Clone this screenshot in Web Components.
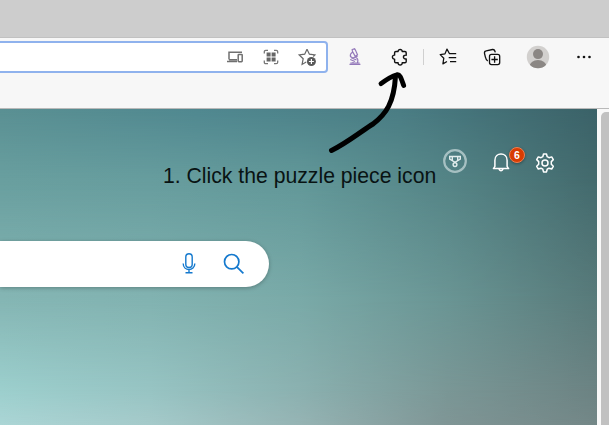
<!DOCTYPE html>
<html lang="en">
<head>
<meta charset="utf-8">
<title>New tab</title>
<style>
html,body{margin:0;height:100%;overflow:hidden}
body{font-family:"Liberation Sans",Arial,sans-serif}
</style>
</head>
<body>
<browser-window></browser-window>
<script>
const icons = {
  devices: '<g stroke="#707070" stroke-width="1.5"><path d="M6 14.5V7.3H19M4 16.6h10M6 14.8h8"/><rect x="15.2" y="9.4" width="4" height="7.4" rx=".7"/></g>',
  grid: '<g stroke="#777" stroke-width="1.3"><path d="M5.3 8.5V6.8Q5.3 5.3 6.8 5.3H9M15 5.3h2.2q1.5 0 1.5 1.5V8.5M18.7 15.5v1.7q0 1.5-1.5 1.5H15M9 18.7H6.8q-1.5 0-1.5-1.5V15.5"/></g><path fill="#666" d="M7.6 7.6h4v4h-4zM12.6 7.6h4v4h-4zM7.6 12.6h4v4h-4zM12.6 12.6h4v4h-4z"/>',
  addstar: '<path stroke="#666" stroke-width="1.2" d="M12 4.2 9.7 9.2 4.2 9.9 8.2 13.7 7.1 19.4 11.2 17M12 4.2 14.4 9.2 19.9 9.9 18.3 11.5"/><circle cx="16.4" cy="16.5" r="4.5" fill="#595959"/><path stroke="#fff" stroke-width="1.2" d="M13.9 16.5h5M16.4 14v5"/>',
  microscope: '<g stroke="#9479ba" stroke-width="1.2"><path d="M9.2 4.5 11.6 3.8 12.4 5.1 14.5 9.8 12.2 11.3 9.4 6.2zM9.5 7.2Q6.7 8.8 7.5 11.5L9.8 13 14.7 11M8.2 12.7 13.5 15M12.6 12.5Q15.8 13.5 14.5 17.7M7.2 14.5 12 16.5M7.3 18H16.6M6.5 19.4H17.4M10 15.5V18"/></g>',
  puzzle: '<path stroke="#111" stroke-width="1.4" stroke-linejoin="round" d="M8.9 6.5h2.2c-.3-2.7 4.4-2.7 4.1 0h2.7q1.3 0 1.3 1.3v2.4c-3.7-.5-3.7 4.2 0 3.7v2.5q0 1.3-1.3 1.3h-2.7c.3 3.1-4.4 3.1-4.1 0H8.9q-1.3 0-1.3-1.3v-2.3c-2.9.3-2.9-4.3 0-4V7.8q0-1.3 1.3-1.3z"/>',
  favorites: '<path stroke="#111" stroke-width="1.25" stroke-linejoin="round" d="M14.3 8.7h-.8L11 4.1 9 8.8 4.2 9.6 7.8 13.2 6.9 18.9 11 16.5M14 8.5h6.2M12.7 12.5h7.5M14 16.5h6.2"/>',
  collections: '<g stroke="#111" stroke-width="1.3"><rect x="9.5" y="9.4" width="10.2" height="10.2" rx="2"/><path d="M14.6 11.3v6.4M11.4 14.5h6.4M7.8 16Q6 15 5.4 12.2L4.5 8.3Q4.2 6.2 6.2 5.9L12.5 4.5Q14.6 4.2 15.3 7.3"/></g>',
  avatar: '<defs><clipPath id="c"><circle cx="12" cy="12" r="11.2"/></clipPath></defs><g clip-path="url(#c)"><path fill="#d2d0ce" d="M0 0h24v24H0z"/><g fill="#8b8784"><circle cx="12" cy="9.1" r="5"/><ellipse cx="12" cy="21.8" rx="8.6" ry="6.8"/></g></g>',
  dots: '<g fill="#111"><circle cx="6.5" cy="12" r="1.3"/><circle cx="12" cy="12" r="1.3"/><circle cx="17.5" cy="12" r="1.3"/></g>',
  medal: '<circle cx="12" cy="12" r="10.8" stroke="#a6c0c2" stroke-width="2.2"/><g stroke="#e2eded" stroke-width="1.4"><path d="M6.7 7.5h10.6V10L12 13.3 6.7 10zM9.3 7.5v3.7M14.7 7.5v3.7"/><circle cx="12" cy="15.6" r="1.9"/></g>',
  bell: '<g stroke="#fff" stroke-width="1.5" stroke-linejoin="round"><path d="M5.9 16.4V10.2C5.9 1.8 18.1 1.8 18.1 10.2V16.4L19.6 18.6H4.4z"/><path d="M9.9 19Q12 22.3 14.1 19"/></g>',
  gear: '<g stroke="#fff" stroke-width="1.5" stroke-linejoin="round"><circle cx="12" cy="12" r="3"/><path d="M10.5 3h3l.7 2.7 1.8 1 2.7-.8 1.6 2.7-2 2v2.7l2 2-1.6 2.7-2.7-.8-1.8 1-.7 2.7h-3l-.7-2.7-1.8-1-2.7.8-1.6-2.7 2-2v-2.7l-2-2 1.6-2.7 2.7.8 1.8-1z"/></g>',
  mic: '<g stroke="#1479ce" stroke-width="1.4"><rect x="8.8" y="1.7" width="6.4" height="13.8" rx="3.2"/><path d="M6.2 11.5c0 8 11.6 8 11.6 0M12 17.5v3M8.5 20.7h7"/></g>',
  search: '<g stroke="#1479ce" stroke-width="1.7"><circle cx="9.7" cy="9.7" r="7.2"/><path d="m14.8 14.8 6.6 6.6"/></g>'
};

const define = (tag, html) => customElements.define(tag, class extends HTMLElement {
  constructor() {
    super();
    const t = document.createElement('template');
    t.innerHTML = html;
    this.attachShadow({ mode: 'open' }).append(t.content.cloneNode(true));
  }
});

customElements.define('ui-icon', class extends HTMLElement {
  connectedCallback() {
    if (this.shadowRoot) return;
    this.attachShadow({ mode: 'open' }).innerHTML =
      `<style>:host{display:block;flex:none;width:24px;height:24px}svg{display:block}</style>
       <svg width="24" height="24" viewBox="0 0 24 24" fill="none">${icons[this.getAttribute('name')]}</svg>`;
  }
});

define('tab-strip', `<style>:host{display:block;height:38px;box-sizing:border-box;background:#cdcdcd;border-bottom:1px solid #c1c1c1}</style>`);

define('address-bar', `
<style>
:host{display:flex;align-items:center;justify-content:flex-end;gap:12px;box-sizing:border-box;width:328px;height:32px;
padding-right:7px;background:#fff;border:2px solid #8fb2ed;border-left:0;border-radius:0 4px 4px 0}
</style><slot></slot>`);

define('tool-bar', `
<style>
:host{display:block;height:71px;box-sizing:border-box;padding-top:3px;background:#f7f7f7;border-bottom:1px solid #b9b9b9}
.row{display:flex;align-items:center;height:32px}
.row>ui-icon{margin-left:20px}
.row>.first{margin-left:15px}
.row>.near{margin-left:12px}
.row>.wide{margin-left:22px}
.sep{width:1px;height:16px;margin-left:12px;background:#d0d0d0}
</style>
<div class="row">
<address-bar><ui-icon name="devices"></ui-icon><ui-icon name="grid"></ui-icon><ui-icon name="addstar"></ui-icon></address-bar>
<ui-icon class="first" name="microscope"></ui-icon>
<ui-icon name="puzzle"></ui-icon>
<div class="sep"></div>
<ui-icon class="near" name="favorites"></ui-icon>
<ui-icon name="collections"></ui-icon>
<ui-icon class="wide" name="avatar"></ui-icon>
<ui-icon class="wide" name="dots"></ui-icon>
</div>`);

define('count-badge', `
<style>:host{position:absolute;left:16px;top:-7px;width:14px;height:14px;border:1px solid #ee8053;border-radius:50%;background:#d83b01;
color:#fff;font:bold 10.5px/14px "Liberation Sans",Arial,sans-serif;text-align:center;box-shadow:0 1px 3px #0005}</style><slot></slot>`);

define('search-box', `
<style>
:host{display:flex;align-items:center;justify-content:flex-end;gap:21px;box-sizing:border-box;width:269px;height:46px;padding-right:23px;
background:#fff;border-radius:0 23px 23px 0;box-shadow:0 1px 4px #0004}
</style><slot></slot>`);

define('scroll-bar', `
<style>:host{display:flex;flex:none;box-sizing:border-box;width:12px;padding:3px 0 0 4px;background:#f8f8f8}
.thumb{flex:1;background:#c1c1c1;border-radius:5px 0 0 0}</style><div class="thumb"></div>`);

define('home-page', `
<style>
:host{display:grid;grid-template-rows:132px 46px 1fr;flex:1;position:relative}
.bg{grid-area:1/1/4/2;background:linear-gradient(90deg,#5a9093,#508890 33%,#4a7d84 67%,#3b6268)}
.m{-webkit-mask:linear-gradient(#0000 var(--a),#000 var(--b));mask:linear-gradient(#0000 var(--a),#000 var(--b))}
.b1{--a:0px;--b:71px;background:linear-gradient(90deg,#699f9f,#679d9e 25%,#629899 50%,#548486 75%,#436a6d)}
.b2{--a:71px;--b:191px;background:linear-gradient(90deg,#85b6b4,#82b3b1 25%,#7aaaa8 50%,#6a9594 75%,#587a7a)}
.b3{--a:191px;--b:281px;background:linear-gradient(90deg,#9ccfcd,#97c4c3 25%,#8bb1b0 50%,#7a9796 75%,#6c8383)}
.b4{--a:281px;--b:316px;background:linear-gradient(90deg,#abd5d5,#a5caca 25%,#96b4b4 50%,#7f9595 75%,#738787)}
.head{grid-area:1/1;display:flex;align-items:flex-start;z-index:1;padding-left:163px}
.note{flex:none;width:280px;margin-top:54px;font-size:21.2px;line-height:26px;white-space:nowrap;color:#091313}
.head ui-icon{margin-top:40px}
.bell{position:relative;margin:41px 0 0 22px}
.bell ui-icon{margin:0}
.bell count-badge{left:20px;top:-3px}
.head .gear{margin:42px 0 0 20px}
search-box{grid-area:2/1;z-index:1}
</style>
<div class="bg"></div><div class="bg m b1"></div><div class="bg m b2"></div><div class="bg m b3"></div><div class="bg m b4"></div>
<div class="head">
<div class="note">1. Click the puzzle piece icon</div>
<ui-icon name="medal"></ui-icon>
<div class="bell"><ui-icon name="bell"></ui-icon><count-badge>6</count-badge></div>
<ui-icon class="gear" name="gear"></ui-icon>
</div>
<search-box><ui-icon name="mic"></ui-icon><ui-icon name="search"></ui-icon></search-box>`);

define('pointer-arrow', `
<style>:host{display:block;position:absolute;left:320px;top:65px;z-index:5;pointer-events:none}svg{display:block}</style>
<svg width="100" height="95" fill="none" stroke="#000" stroke-linecap="round" stroke-linejoin="round">
<path stroke-width="5" d="M11.5 85.5C27 78 43 65 53 59 66 49 74 38 75.5 11"/>
<path stroke-width="4.8" d="M61 18.7C67 14 72 11 77 9.7 80 9 81 13 83.7 20.5"/></svg>`);

define('browser-window', `
<style>
:host{display:flex;flex-direction:column;position:relative;width:609px;height:425px;overflow:hidden}
.view{display:flex;flex:1;min-height:0}
</style>
<tab-strip></tab-strip>
<tool-bar></tool-bar>
<div class="view"><home-page></home-page><scroll-bar></scroll-bar></div>
<pointer-arrow></pointer-arrow>`);
</script>
</body>
</html>
